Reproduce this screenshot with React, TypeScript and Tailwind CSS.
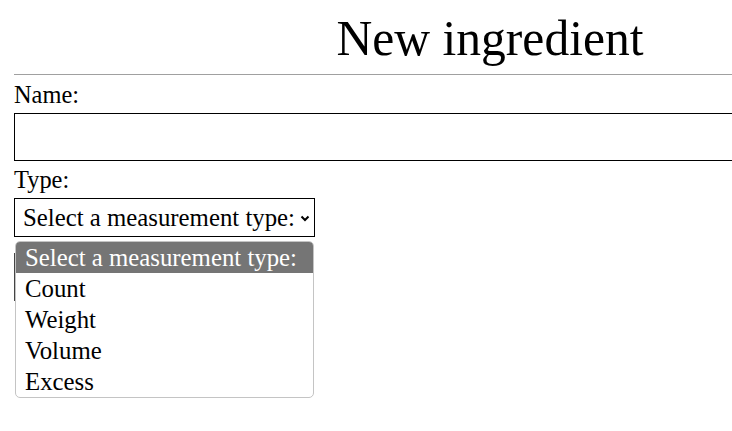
const options = ['Count', 'Weight', 'Volume', 'Excess'];

export default function App() {
  return (
    <div className="w-[732px] h-[431px] overflow-hidden bg-white text-black font-['Liberation_Serif',serif]">
      <div className="w-[952px] ml-[14px]">
        <h1 className="text-center text-[49.6px] leading-[53px] pt-[12px] pb-[9px]">New ingredient</h1>
        <div className="h-px bg-[#a0a0a0]" />

        <div className="flex flex-col">
          <label className="text-[24.4px] leading-[27px] mt-[6px]">Name:</label>
          <input type="text" className="mt-[5px] h-[48px] border border-black bg-white outline-none" />

          <label className="text-[24.4px] leading-[27px] mt-[5px]">Type:</label>
          <div className="relative mt-[5px] w-[301px]">
            <div className="flex h-[39px] items-center justify-between border border-black pl-[8px] pr-[4px] text-[24.8px]">
              <span>Select a measurement type:</span>
              <svg width="10" height="7" viewBox="0 0 10 7" className="mt-[2px]">
                <path d="M1.5 1.5 L5 5 L8.5 1.5" stroke="black" strokeWidth="2" fill="none" />
              </svg>
            </div>

            {/* button sitting under the open list */}
            <button className="mt-[16px] h-[48px] w-[80px] border-l border-[#444]" />

            <div className="absolute left-px top-[43px] w-[299px] overflow-hidden rounded-[5px] border border-[#c4c4c4] bg-white text-[24.8px] leading-[31px]">
              <div className="bg-[#757575] pl-[9px] text-white">Select a measurement type:</div>
              {options.map((o) => (
                <div key={o} className="pl-[9px]">
                  {o}
                </div>
              ))}
            </div>
          </div>
        </div>
      </div>
    </div>
  );
}
